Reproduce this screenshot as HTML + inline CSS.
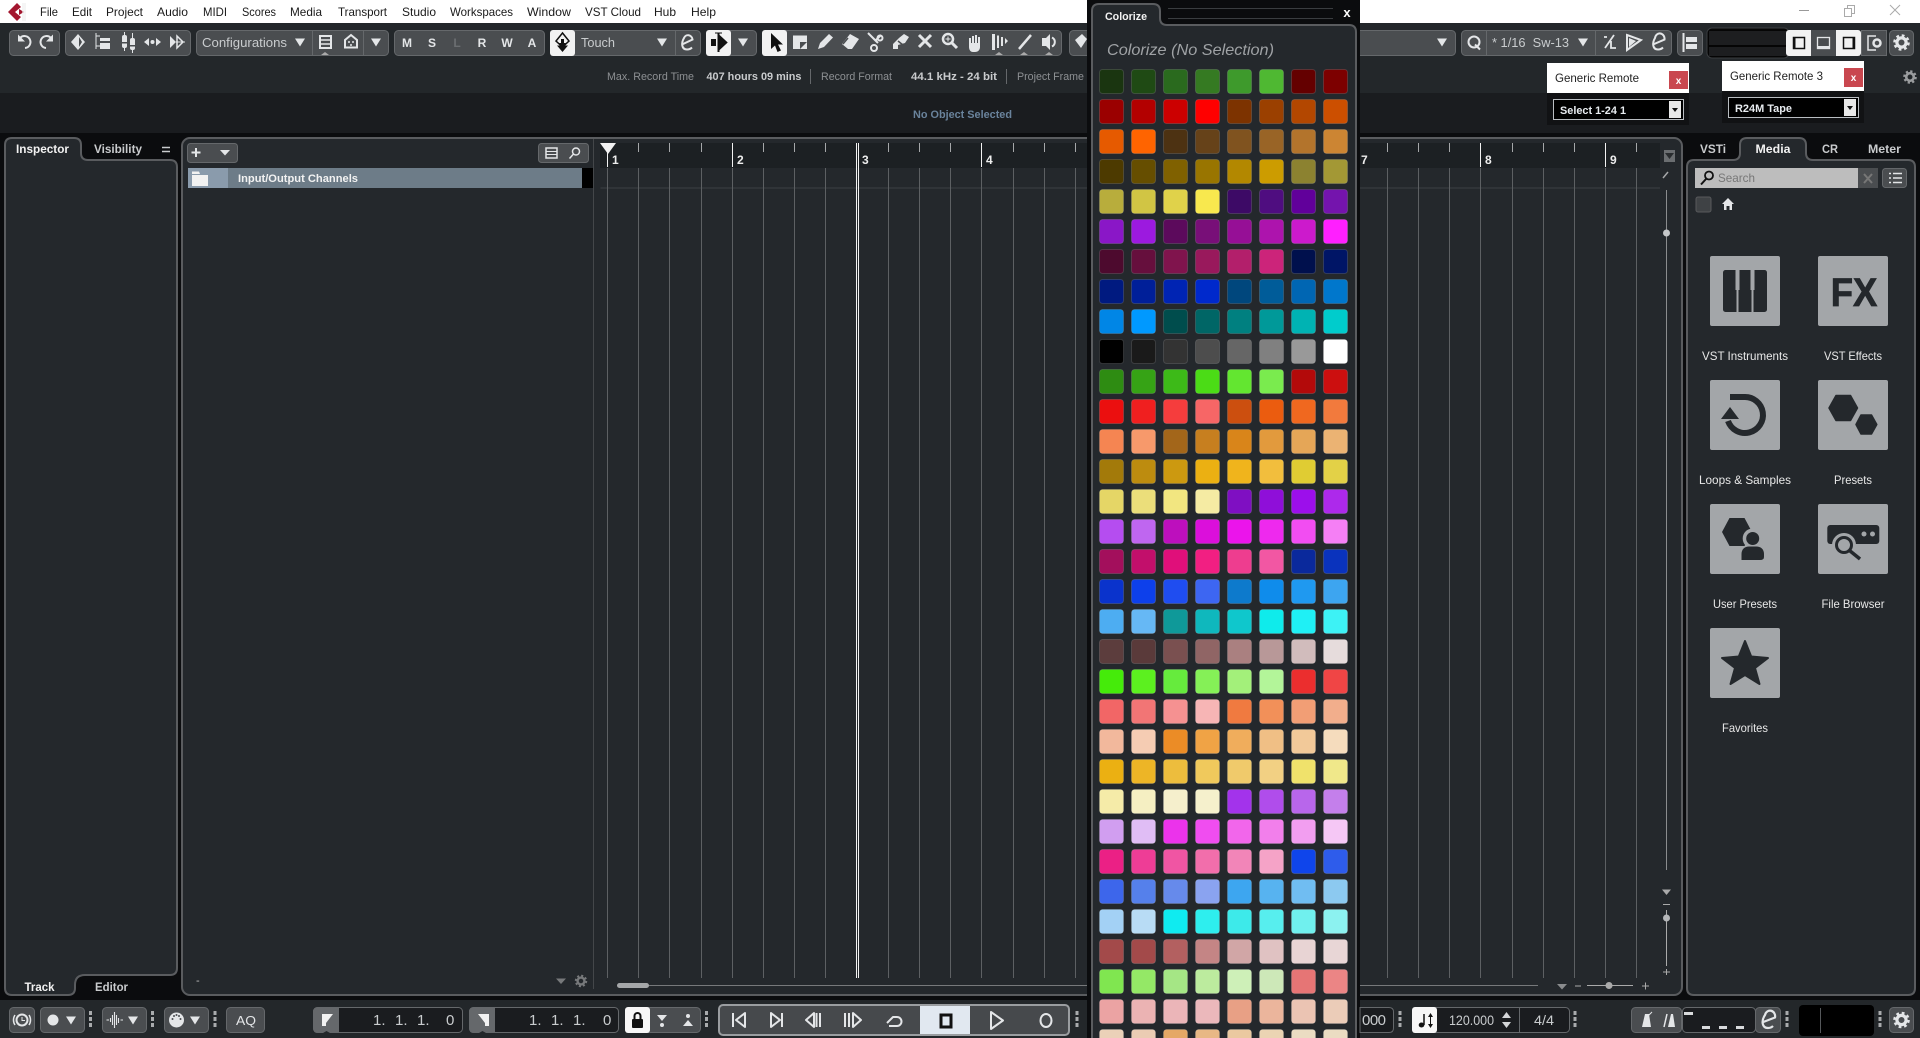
<!DOCTYPE html>
<html><head><meta charset="utf-8"><style>
html,body{margin:0;padding:0;background:#0b0c0e;width:1920px;height:1038px;overflow:hidden}
svg{display:block;font-family:"Liberation Sans",sans-serif}
.m{font-size:12px;fill:#1a1a1a}
.g{font-size:11px;fill:#8d9093}
.w{font-size:11px;fill:#c9cbcd;font-weight:bold}
.b{fill:#4a4d50;stroke:#65686b;stroke-width:1}
.d{fill:#1a1c1f;stroke:#65686b;stroke-width:1}
.t{fill:#c9ccce;font-size:13px}
.i{fill:#e4e6e8}
.k{fill:none;stroke:#e4e6e8;stroke-width:2}
.lb{font-size:12px;fill:#e8e8e8;text-anchor:middle}
.s rect{width:24px;height:24px;rx:3px;y:.5px;stroke:rgba(255,255,255,.13);stroke-width:1}
.n{font-size:15px;fill:#c9ccce}
.r{font-size:12px;font-weight:bold;fill:#eee}
</style></head><body>
<svg width="1920" height="1038" viewBox="0 0 1920 1038" xmlns="http://www.w3.org/2000/svg">
<defs>
<g id="gear"><circle r="4.6" fill="none" stroke="currentColor" stroke-width="3.2"/><circle r="7" fill="none" stroke="currentColor" stroke-width="2.6" stroke-dasharray="2.75 2.75"/></g>
<g id="dots" fill="#a9abad"><rect x="-1.5" y="1011" width="3" height="4"/><rect x="-1.5" y="1017" width="3" height="4"/><rect x="-1.5" y="1023" width="3" height="4"/></g>
<path id="arr" d="M-5 -3.5H5L0 4.5Z" fill="#e4e6e8"/>
</defs>

<rect width="1920" height="1038" fill="#0b0c0e"/>
<rect width="1920" height="23" fill="#fff"/>
<rect y="23" width="1920" height="70" fill="#23272a"/>
<rect y="93" width="1920" height="40" fill="#1a1c1f"/>
<rect y="1000" width="1920" height="38" fill="#23272a"/>

<!-- logo -->
<path d="M8 12 L17 3 L21 7 L15 12 L21 17 L17 21Z" fill="#a3172f"/><path d="M19 9 L24 12 L19 15Z" fill="#a3172f"/><rect x="22" y="3" width="4" height="18" fill="#eee" opacity=".6"/>
<!-- menu -->
<g class="m" style="font-size:12px" fill="#1a1a1a"><text x="40" y="16" textLength="18" lengthAdjust="spacingAndGlyphs">File</text><text x="72" y="16" textLength="20" lengthAdjust="spacingAndGlyphs">Edit</text><text x="106" y="16" textLength="37" lengthAdjust="spacingAndGlyphs">Project</text><text x="157" y="16" textLength="31" lengthAdjust="spacingAndGlyphs">Audio</text><text x="203" y="16" textLength="24" lengthAdjust="spacingAndGlyphs">MIDI</text><text x="242" y="16" textLength="34" lengthAdjust="spacingAndGlyphs">Scores</text><text x="290" y="16" textLength="32" lengthAdjust="spacingAndGlyphs">Media</text><text x="338" y="16" textLength="49" lengthAdjust="spacingAndGlyphs">Transport</text><text x="402" y="16" textLength="34" lengthAdjust="spacingAndGlyphs">Studio</text><text x="450" y="16" textLength="63" lengthAdjust="spacingAndGlyphs">Workspaces</text><text x="527" y="16" textLength="44" lengthAdjust="spacingAndGlyphs">Window</text><text x="585" y="16" textLength="56" lengthAdjust="spacingAndGlyphs">VST Cloud</text><text x="654" y="16" textLength="22" lengthAdjust="spacingAndGlyphs">Hub</text><text x="691" y="16" textLength="25" lengthAdjust="spacingAndGlyphs">Help</text></g>
<!-- window controls -->
<path d="M1799 10.500H1809" stroke="#999"/><path d="M1844.500 8.500h7v8h-7zM1847.500 8.500v-3h7v8h-3" fill="none" stroke="#aaa"/><path d="M1890 5L1900 15M1900 5L1890 15" stroke="#aaa"/>

<!-- toolbar groups -->
<rect class="b" x="9.500" y="30.500" width="50" height="25" rx="4"/>
<path class="k" d="M20.500 37.500 A6 6 0 1 1 25 48"/><path class="i" d="M18 34.500V41.500H25Z"/>
<path class="k" d="M50.500 37.500 A6 6 0 1 0 46 48"/><path class="i" d="M53 34.500V41.500H46Z"/>
<rect class="b" x="65.500" y="30.500" width="125" height="25" rx="4"/>
<path class="i" d="M78 34 L71 42 L78 50 L85 42Z"/><path d="M79 37 L82 42 L79 47Z" fill="#4a4d50"/>
<path d="M96 33V49M96 36H100M96 46H100" stroke="#e4e6e8" fill="none"/><rect class="i" x="100" y="38" width="10" height="3"/><rect class="i" x="100" y="43" width="10" height="6"/>
<rect class="i" x="122" y="35" width="5" height="13" rx="2"/><rect class="i" x="130" y="38" width="5" height="12" rx="2"/><path d="M124.500 32V51M132.500 33V53" stroke="#e4e6e8"/><rect x="122" y="42" width="5" height="1.500" fill="#4a4d50"/><rect x="130" y="45" width="5" height="1.500" fill="#4a4d50"/>
<path class="i" d="M144 42l5-4v8zM161 42l-5-4v8z"/><circle class="i" cx="152.500" cy="42" r="2"/>
<path class="i" d="M170 36l6 6-6 6z"/><path d="M177 36l6 6-6 6z" fill="none" stroke="#e4e6e8" stroke-width="1.500"/><path d="M176 42h9" stroke="#e4e6e8"/>

<rect class="b" x="196.500" y="30.500" width="192" height="25" rx="4"/>
<text class="t" x="202" y="47" textLength="85" lengthAdjust="spacingAndGlyphs">Configurations</text>
<use href="#arr" x="300" y="42"/><path d="M312.500 31V55M363.500 31V55" stroke="#65686b"/>
<rect x="320" y="36" width="11" height="12" fill="none" stroke="#e4e6e8" stroke-width="2"/><path d="M320 40h11M320 44h11" stroke="#e4e6e8" stroke-width="1.500"/>
<path d="M345 47.500V40L351 35L357 40V47.500Z" fill="none" stroke="#e4e6e8" stroke-width="2"/><circle class="i" cx="349" cy="42" r="1"/><circle class="i" cx="353" cy="42" r="1"/><circle class="i" cx="351" cy="45" r="1"/>
<use href="#arr" x="376" y="42"/><path d="M321 55l4-3 4 3z" fill="#aaa"/>

<rect class="b" x="394.500" y="30.500" width="150" height="25" rx="4"/>
<g font-size="12" font-weight="bold" fill="#e4e6e8" text-anchor="middle"><text x="407" y="47">M</text><text x="432" y="47">S</text><text x="457" y="47" fill="#6b6e71">L</text><text x="482" y="47">R</text><text x="507" y="47">W</text><text x="532" y="47">A</text></g>

<rect class="b" x="550.500" y="30.500" width="150" height="25" rx="4"/>
<rect x="550" y="30" width="25" height="26" rx="3" fill="#f2f2f2"/>
<path d="M562.500 33L556 41L562.500 47L569 41Z" fill="none" stroke="#111" stroke-width="1.500"/><path d="M559.500 43H561V39H564V43H565.500V45.500H568L562.500 52L557 45.500H559.500Z" fill="#111"/>
<text class="t" x="581" y="47" textLength="34" lengthAdjust="spacingAndGlyphs">Touch</text>
<use href="#arr" x="662" y="42"/><path d="M675.500 31V55" stroke="#65686b"/>
<path d="M682 44.500L692.500 39.500A4.500 5 0 0 0 684 38C681 43 681.500 49.500 687 49.500C689 49.500 691 48.500 692 47.500" fill="none" stroke="#e4e6e8" stroke-width="2"/>

<rect class="b" x="706.500" y="30.500" width="50" height="25" rx="4"/>
<rect x="706" y="30" width="25" height="26" rx="3" fill="#f2f2f2"/>
<rect x="711" y="39" width="5" height="7" fill="#111"/><path d="M718.500 33V52" stroke="#111" stroke-width="2"/><path d="M715 33h7M720 36l7 6.500-7 6.500z" fill="#111" stroke="#111" stroke-width="1"/>
<use href="#arr" x="743" y="42"/>

<rect class="b" x="762.500" y="30.500" width="299" height="25" rx="4"/>
<rect x="762" y="30" width="25" height="26" rx="3" fill="#f2f2f2"/>
<path d="M771 33V49L775 45.500L777.500 52L781 50.500L778 44.500H783Z" fill="#111"/>
<path class="i" d="M793 35.500H807V49H793Z"/><path d="M800 42H807L800 49Z" fill="#4a4d50"/>
<path class="i" d="M818 49L820 43L829 34L833 37.500L824 47Z"/>
<path class="i" d="M850 34L859 39L852 49H848L842 44Z"/><path d="M843 44L848 38" stroke="#4a4d50" stroke-width="1.500"/>
<path class="k" d="M868 33L878 43"/><path class="k" d="M881 35L875 41"/><circle cx="874" cy="48" r="3" class="k"/><circle cx="880" cy="38" r="2.500" class="k"/>
<path class="i" d="M893 49V44L899 38L904 34L909 37L905 43L898 45V49Z"/><path d="M898 41L903 45" stroke="#4a4d50" stroke-width="1.500"/>
<path d="M919 35L931 47M931 35L919 47" stroke="#e4e6e8" stroke-width="3"/>
<circle cx="948" cy="39" r="5" fill="none" stroke="#e4e6e8" stroke-width="2.500"/><path d="M952 43L957 48" stroke="#e4e6e8" stroke-width="3"/><path d="M945.500 39h5M948 36.500v5" stroke="#e4e6e8"/>
<path class="i" d="M969 38h2v5h1v-7h2v7h1v-8h2v8h1v-6h2v10c0 3-2 5-5 5h-2c-3 0-4-3-4-5z"/>
<path class="i" d="M992 34H995V50H992ZM997 35.500H999V48H997ZM1001 37H1003V46H1001ZM1005 38L1008 41L1005 44Z"/>
<path d="M1019 49L1031 35" stroke="#e4e6e8" stroke-width="2.500"/>
<path class="i" d="M1042 38H1046L1050 34V50L1046 46H1042Z"/><path d="M1052 37.500A5 5 0 0 1 1052 46.500" fill="none" stroke="#e4e6e8" stroke-width="2"/>
<path d="M995 55l4-3 4 3zM1020 55l4-3 4 3zM1045 55l4-3 4 3z" fill="#aaa"/>

<rect class="b" x="1069.500" y="30.500" width="386" height="25" rx="4"/>
<path class="i" d="M1075 40L1082 34L1087 39L1081 48Z"/>
<use href="#arr" x="1442" y="42"/>
<rect class="b" x="1461.500" y="30.500" width="210" height="25" rx="4"/>
<circle cx="1474" cy="42" r="5.500" fill="none" stroke="#e4e6e8" stroke-width="2"/><path d="M1475 44.500L1480 49.500" stroke="#e4e6e8" stroke-width="2"/>
<path d="M1486.500 31V55M1595.500 31V55" stroke="#65686b"/>
<text class="t" x="1492" y="47" textLength="77" lengthAdjust="spacingAndGlyphs">* 1/16&#160; Sw-13</text>
<use href="#arr" x="1583" y="42"/>
<path d="M1604 37H1607M1614 35L1605 48M1611 41V48L1616 48" fill="none" stroke="#e4e6e8" stroke-width="1.800"/>
<path d="M1627 35L1641 40L1627 50Z" fill="none" stroke="#e4e6e8" stroke-width="2"/><path class="i" d="M1629 38L1636 41L1629 47Z"/>
<path d="M1653 44.500L1664.500 39.500A4.500 5 0 0 0 1655 38C1652 43 1652.500 49.500 1658 49.500C1660 49.500 1662 48.500 1663 47.500" fill="none" stroke="#e4e6e8" stroke-width="2"/>
<rect class="b" x="1677.500" y="30.500" width="25" height="25" rx="4"/>
<path d="M1683.500 33V52" stroke="#e4e6e8" stroke-width="2"/><rect class="i" x="1686" y="37" width="11" height="5"/><rect class="i" x="1686" y="44" width="11" height="5"/>
<rect x="1707" y="28" width="82" height="30" rx="5" fill="#050505" stroke="#3a3d40"/><rect x="1709" y="31" width="78" height="14" fill="#1d1e20"/><rect x="1709" y="47" width="78" height="9" fill="#1d1e20"/>
<rect x="1786" y="30" width="75" height="26" rx="3" fill="#f2f2f2"/><rect x="1811" y="30" width="25" height="26" fill="#4a4d50"/><rect class="b" x="1861.500" y="30.500" width="25" height="25"/>
<rect x="1793.500" y="37.500" width="11" height="11" fill="none" stroke="#111" stroke-width="1.500"/><rect x="1793" y="37" width="2.500" height="12" fill="#111"/>
<rect x="1817.500" y="37.500" width="12" height="11" fill="none" stroke="#e4e6e8" stroke-width="1.300"/><rect class="i" x="1817" y="46" width="13" height="3"/>
<rect x="1843.500" y="37.500" width="11" height="11" fill="none" stroke="#111" stroke-width="1.500"/><rect x="1852.500" y="37" width="2.500" height="12" fill="#111"/>
<path d="M1876 36H1868V50H1876" fill="none" stroke="#e4e6e8" stroke-width="1.500"/><circle cx="1877" cy="43" r="3.500" fill="none" stroke="#e4e6e8" stroke-width="2.500"/>
<rect class="b" x="1889.500" y="30.500" width="24" height="25" rx="4"/><use href="#gear" x="1901.500" y="42.500" style="color:#e4e6e8"/>

<!-- status row -->
<text class="g" x="607" y="80" textLength="87" lengthAdjust="spacingAndGlyphs">Max. Record Time</text>
<text class="w" x="706.500" y="80" textLength="95" lengthAdjust="spacingAndGlyphs">407 hours 09 mins</text>
<path d="M810.500 69V84M1006.500 69V84" stroke="#65686b"/>
<text class="g" x="821" y="80" textLength="71" lengthAdjust="spacingAndGlyphs">Record Format</text>
<text class="w" x="911" y="80" textLength="86" lengthAdjust="spacingAndGlyphs">44.1 kHz - 24 bit</text>
<text class="g" x="1017" y="80" textLength="67" lengthAdjust="spacingAndGlyphs">Project Frame</text>
<text x="913" y="118" font-size="11" font-weight="bold" fill="#6a839c" textLength="99" lengthAdjust="spacingAndGlyphs">No Object Selected</text>
<g transform="translate(1910 77) scale(.82)"><use href="#gear" style="color:#9a9c9e"/></g>

<!-- inspector -->
<path d="M5 145Q5 138 12 138H74Q81 138 81 145V153Q81 160 88 160H170Q177 160 177 167V968Q177 975 170 975H85Q75 975 75 985V988Q75 995 68 995H12Q5 995 5 988Z" fill="#24282c" stroke="#5a5c5f" stroke-width="2"/>
<text x="16" y="153" font-size="12" font-weight="bold" fill="#f2f2f2" textLength="53" lengthAdjust="spacingAndGlyphs">Inspector</text>
<text x="94" y="153" font-size="12" font-weight="bold" fill="#c9cbcd" textLength="48" lengthAdjust="spacingAndGlyphs">Visibility</text>
<path d="M162 147.500H170M162 151.500H170" stroke="#c9cbcd" stroke-width="1.500"/>
<text x="24.500" y="991" font-size="12" font-weight="bold" fill="#f2f2f2" textLength="30" lengthAdjust="spacingAndGlyphs">Track</text>
<text x="95" y="991" font-size="12" font-weight="bold" fill="#c9cbcd" textLength="33" lengthAdjust="spacingAndGlyphs">Editor</text>

<!-- main panel -->
<rect x="182" y="138" width="1500" height="857" rx="8" fill="#24282c" stroke="#5a5c5f" stroke-width="2"/>
<rect class="b" x="187.500" y="143.500" width="50" height="19" rx="3"/>
<path d="M196 148V157M191.500 152.500H200.500" stroke="#e4e6e8" stroke-width="2"/><path d="M220 150H230L225 155.500Z" fill="#e4e6e8"/>
<rect class="b" x="538.500" y="143.500" width="50" height="19" rx="3"/>
<rect x="546" y="148" width="11" height="10" fill="none" stroke="#e4e6e8" stroke-width="1.500"/><path d="M546 151.500h11M546 154.500h11" stroke="#e4e6e8"/><circle cx="576" cy="151.500" r="3.500" fill="none" stroke="#e4e6e8" stroke-width="1.500"/><path d="M573.500 154L569.500 158.500" stroke="#e4e6e8" stroke-width="1.500"/>
<rect x="188" y="168" width="395" height="20" fill="#6d7c88"/><rect x="188" y="168" width="40" height="20" fill="#8a9bac"/><rect x="582" y="168" width="11" height="20" fill="#000"/>
<path d="M192 171.500H199L200 174H208V186H192Z" fill="#f2f2f2"/><path d="M192 174.500H208" stroke="#8a9bac"/>
<text x="238" y="182" font-size="11" font-weight="bold" fill="#f2f2f2" textLength="120" lengthAdjust="spacingAndGlyphs">Input/Output Channels</text>
<path d="M593.500 139V989" stroke="#44474a"/>
<text x="196" y="984" font-size="11" fill="#bbb">-</text>
<path d="M556 978.500H566L561 984Z" fill="#77797b"/><g transform="translate(581 981) scale(.75)"><use href="#gear" style="color:#77797b"/></g>

<!-- ruler -->
<rect x="600" y="143" width="1060" height="25" fill="#1c2023"/>
<path d="M600.500 188H1660" stroke="#3b3f43"/>
<path fill="none" stroke="#5d6063" d="M607.500 168V978M638.500 168V978M669.500 168V978M701.500 168V978M732.500 168V978M763.500 168V978M794.500 168V978M825.500 168V978M888.500 168V978M919.500 168V978M950.500 168V978M981.500 168V978M1013.500 168V978M1044.500 168V978M1075.500 168V978M1387.500 168V978M1418.500 168V978M1449.500 168V978M1480.500 168V978M1512.500 168V978M1543.500 168V978M1574.500 168V978M1605.500 168V978M1636.500 168V978"/>
<path fill="none" stroke="#a5a7a9" d="M638.500 143V152M669.500 143V152M701.500 143V152M763.500 143V152M794.500 143V152M825.500 143V152M888.500 143V152M919.500 143V152M950.500 143V152M1013.500 143V152M1044.500 143V152M1075.500 143V152M1387.500 143V152M1418.500 143V152M1449.500 143V152M1512.500 143V152M1543.500 143V152M1574.500 143V152M1636.500 143V152"/>
<path fill="none" stroke="#f2f2f2" d="M607.500 152V167M732.500 143V167M981.500 143V167M1480.500 143V167M1605.500 143V167"/>
<path d="M856.500 143V978M858.500 143V978" stroke="#f2f2f2"/>
<path d="M600 143H616L608 154Z" fill="#f2f2f2"/>
<g class="r"><text x="612" y="164">1</text><text x="737" y="164">2</text><text x="862" y="164">3</text><text x="986" y="164">4</text><text x="1361" y="164">7</text><text x="1485" y="164">8</text><text x="1610" y="164">9</text></g>
<rect x="1664" y="150" width="11" height="12" fill="#6b6e71"/><path d="M1665 153H1674L1669.500 159Z" fill="#2a2d30"/>
<path d="M1663 178L1668 172" stroke="#a5a7a9" stroke-width="1.500"/>
<path d="M1666.500 190V870" stroke="#8a8c8e"/><circle cx="1666.500" cy="233" r="3.500" fill="#c5c7c9"/>
<path d="M1662 889.500H1671L1666.500 895Z" fill="#aaa"/><path d="M1663 904.500H1670" stroke="#aaa"/><path d="M1666.500 910V966" stroke="#aaa"/><circle cx="1666.500" cy="918" r="3.500" fill="#b5b7b9"/><path d="M1663 972H1670M1666.500 969V975" stroke="#aaa"/>
<!-- h scroll -->
<path d="M617 985.500H1538" stroke="#77797b"/><rect x="617" y="983" width="32" height="5" rx="2.500" fill="#a5a7a9"/>
<path d="M1557 984H1567L1562 989.500Z" fill="#8a8c8e"/><path d="M1575 986H1581" stroke="#aaa"/><path d="M1587 985.500H1633" stroke="#aaa"/><circle cx="1609" cy="985.500" r="3.500" fill="#aaa"/><path d="M1642 986H1649M1645.500 982.500V989.500" stroke="#aaa"/>

<!-- right panel -->
<path d="M1687 167Q1687 160 1694 160H1733Q1740 160 1740 153V145Q1740 138 1747 138H1799Q1806 138 1806 145V153Q1806 160 1813 160H1908Q1915 160 1915 167V988Q1915 995 1908 995H1694Q1687 995 1687 988Z" fill="#24282c" stroke="#5a5c5f" stroke-width="2"/>
<g font-size="12" font-weight="bold"><text x="1700" y="153" fill="#c9cbcd" textLength="26" lengthAdjust="spacingAndGlyphs">VSTi</text><text x="1755.500" y="153" fill="#f2f2f2" textLength="35" lengthAdjust="spacingAndGlyphs">Media</text><text x="1822" y="153" fill="#c9cbcd" textLength="16" lengthAdjust="spacingAndGlyphs">CR</text><text x="1868" y="153" fill="#c9cbcd" textLength="33" lengthAdjust="spacingAndGlyphs">Meter</text></g>
<rect x="1695" y="168" width="163" height="20" fill="#bdbdbd"/><rect x="1858" y="168" width="20" height="20" fill="#4a4d50"/>
<circle cx="1709" cy="175.500" r="4" fill="none" stroke="#111" stroke-width="1.800"/><path d="M1706 179L1701 184.500" stroke="#111" stroke-width="2"/>
<text x="1718" y="182" font-size="12" fill="#777" textLength="37" lengthAdjust="spacingAndGlyphs">Search</text>
<path d="M1864 174L1872 183M1872 174L1864 183" stroke="#777" stroke-width="2"/>
<rect class="b" x="1882.500" y="168.500" width="24" height="19" rx="3"/><path d="M1889 173.500h2M1893 173.500h9M1889 178h2M1893 178h9M1889 182.500h2M1893 182.500h9" stroke="#e4e6e8" stroke-width="1.500"/>
<rect x="1696" y="197" width="15" height="15" rx="2" fill="#3f4245" stroke="#58595c"/>
<path class="i" d="M1722 204L1728 198L1734 204H1732V210H1729.500V206H1726.500V210H1724V204Z"/>

<!-- media tiles -->
<g fill="#a3a6a9">
<rect x="1710" y="256" width="70" height="70" rx="2"/><rect x="1818" y="256" width="70" height="70" rx="2"/>
<rect x="1710" y="380" width="70" height="70" rx="2"/><rect x="1818" y="380" width="70" height="70" rx="2"/>
<rect x="1710" y="504" width="70" height="70" rx="2"/><rect x="1818" y="504" width="70" height="70" rx="2"/>
<rect x="1710" y="628" width="70" height="70" rx="2"/>
</g>
<g transform="translate(1710 256)">
<rect x="13" y="14" width="44" height="42" rx="2.500" fill="#24282c"/>
<rect x="25.500" y="13" width="4" height="21" fill="#a3a6a9"/><rect x="40.500" y="13" width="4" height="21" fill="#a3a6a9"/>
<path d="M27.500 34V57M42.500 34V57" stroke="#a3a6a9" stroke-width="2" fill="none"/>
</g>
<text x="1830.700" y="306" font-size="40" font-weight="bold" fill="#24282c" stroke="#24282c" stroke-width=".8" textLength="46.600" lengthAdjust="spacingAndGlyphs">FX</text>
<g transform="translate(1710 380)" fill="#24282c">
<path d="M20 17H34A18 18 0 1 1 18 41" fill="none" stroke="#24282c" stroke-width="6"/><path d="M20 27L29 39H11Z"/>
</g>
<g transform="translate(1818 380)" fill="#24282c" stroke="#24282c" stroke-width="1.500" stroke-linejoin="round">
<path d="M11 28L18 15.500H32.500L39.500 28L32.500 40.500H18Z"/><path d="M38 44.500L43 35H53.500L58.800 44.500L53.500 54H43Z"/>
</g>
<g transform="translate(1710 504)" fill="#24282c">
<path d="M12 28L19.500 14H34.500L42 28L34.500 42H19.500Z"/><circle cx="42.700" cy="34.500" r="10" fill="#a3a6a9"/><circle cx="42.700" cy="34.500" r="6.500"/><path d="M31.500 56V50C31.500 45 35 42.500 39 42.500H46.500C50.500 42.500 54 45 54 50V53Q54 56 50 56Z"/>
</g>
<g transform="translate(1818 504)">
<rect x="9.300" y="21" width="52" height="19" rx="3" fill="#24282c"/><circle cx="46" cy="30" r="2.500" fill="#a3a6a9"/><circle cx="54.500" cy="30" r="2.500" fill="#a3a6a9"/>
<circle cx="26" cy="41" r="12" fill="#a3a6a9"/><circle cx="26" cy="41" r="7.500" fill="none" stroke="#24282c" stroke-width="3"/><path d="M31.500 46.500L42 55" stroke="#24282c" stroke-width="3.500"/>
</g>
<g transform="translate(1710 628)"><path d="M35 13L41.200 28.500L58 30L45 40L49.500 56L35 47L20.500 56L25 40L12 30L28.800 28.500Z" fill="#24282c" stroke="#24282c" stroke-width="2" stroke-linejoin="round"/></g>
<g textLength="0"><text class="lb" x="1745" y="360" textLength="86" lengthAdjust="spacingAndGlyphs">VST Instruments</text><text class="lb" x="1853" y="360" textLength="58" lengthAdjust="spacingAndGlyphs">VST Effects</text>
<text class="lb" x="1745" y="484" textLength="92" lengthAdjust="spacingAndGlyphs">Loops &amp; Samples</text><text class="lb" x="1853" y="484" textLength="38" lengthAdjust="spacingAndGlyphs">Presets</text>
<text class="lb" x="1745" y="608" textLength="64" lengthAdjust="spacingAndGlyphs">User Presets</text><text class="lb" x="1853" y="608" textLength="63" lengthAdjust="spacingAndGlyphs">File Browser</text>
<text class="lb" x="1745" y="732" textLength="46" lengthAdjust="spacingAndGlyphs">Favorites</text></g>

<!-- generic remotes -->
<rect x="1547" y="63" width="142" height="62" fill="#111214"/><rect x="1547" y="63" width="142" height="30" fill="#fff"/>
<text x="1555" y="82" font-size="12" fill="#222" textLength="84" lengthAdjust="spacingAndGlyphs">Generic Remote</text>
<rect x="1669" y="71" width="19" height="18" fill="#c9474f"/><text x="1678.500" y="84" font-size="10" font-weight="bold" fill="#fff" text-anchor="middle">x</text>
<rect x="1553.500" y="99.500" width="130" height="20" fill="#000" stroke="#b9bdc1"/><rect x="1669" y="101" width="12" height="17" fill="#e8e8e8"/><path d="M1672 108H1678L1675 112Z" fill="#111"/>
<text x="1560" y="114" font-size="11" font-weight="bold" fill="#e8ecf0" textLength="66" lengthAdjust="spacingAndGlyphs">Select 1-24 1</text>
<rect x="1722" y="61" width="142" height="62" fill="#111214"/><rect x="1722" y="61" width="142" height="30" fill="#fff"/>
<text x="1730" y="80" font-size="12" fill="#222" textLength="93" lengthAdjust="spacingAndGlyphs">Generic Remote 3</text>
<rect x="1844" y="68" width="19" height="19" fill="#c9474f"/><text x="1853.500" y="81" font-size="10" font-weight="bold" fill="#fff" text-anchor="middle">x</text>
<rect x="1728.500" y="97.500" width="130" height="20" fill="#000" stroke="#b9bdc1"/><rect x="1844" y="99" width="12" height="17" fill="#e8e8e8"/><path d="M1847 106H1853L1850 110Z" fill="#111"/>
<text x="1735" y="112" font-size="11" font-weight="bold" fill="#e8ecf0" textLength="57" lengthAdjust="spacingAndGlyphs">R24M Tape</text>

<!-- bottom bar -->
<rect class="b" x="9.500" y="1007.500" width="25" height="25" rx="4"/>
<circle cx="22" cy="1020" r="5.500" fill="none" stroke="#e4e6e8" stroke-width="2"/><path d="M22 1017V1020.500H25" fill="none" stroke="#e4e6e8"/><path d="M15 1015A9 9 0 0 0 15 1025M29 1015A9 9 0 0 1 29 1025" fill="none" stroke="#e4e6e8" stroke-width="1.500"/>
<rect class="b" x="40.500" y="1007.500" width="44" height="25" rx="4"/><circle class="i" cx="53" cy="1020" r="5.500"/><use href="#arr" x="71" y="1020"/>
<use href="#dots" x="90.500"/>
<rect class="b" x="102.500" y="1007.500" width="44" height="25" rx="4"/><path d="M106.500 1020H109M110.500 1018V1022M112.500 1015V1025M114.500 1012V1028M116.500 1015V1025M118.500 1018V1023M120.500 1020H123" stroke="#e4e6e8" stroke-width="1.100"/><use href="#arr" x="133" y="1020"/>
<use href="#dots" x="152.500"/>
<rect class="b" x="164.500" y="1007.500" width="44" height="25" rx="4"/><circle class="i" cx="176.500" cy="1020" r="7.500"/><g fill="#4a4d50"><circle cx="172.500" cy="1019" r="1"/><circle cx="180.500" cy="1019" r="1"/><circle cx="174" cy="1016" r="1"/><circle cx="179" cy="1016" r="1"/><circle cx="176.500" cy="1015" r="1"/></g><use href="#arr" x="195" y="1020"/>
<use href="#dots" x="215"/>
<rect class="b" x="226.500" y="1007.500" width="38" height="25" rx="4"/><text x="236" y="1025" font-size="13" fill="#e4e6e8" textLength="20" lengthAdjust="spacingAndGlyphs">AQ</text>

<rect class="d" x="313.500" y="1007.500" width="149" height="25" rx="4"/><path d="M313 1012Q313 1007 318 1007H339V1033H318Q313 1033 313 1028Z" fill="#65686b"/>
<path d="M322 1014H333L326 1023V1026H322Z" fill="#f2f2f2"/><path d="M323 1033l3.500-2 3.500 2z" fill="#23272a"/>
<g class="n"><text x="373" y="1025">1.</text><text x="395" y="1025">1.</text><text x="417" y="1025">1.</text><text x="446" y="1025">0</text></g>
<rect class="d" x="469.500" y="1007.500" width="149" height="25" rx="4"/><path d="M469 1012Q469 1007 474 1007H495V1033H474Q469 1033 469 1028Z" fill="#65686b"/>
<path d="M478 1014H489V1026H485V1023Z" fill="#f2f2f2"/><path d="M479 1033l3.500-2 3.500 2z" fill="#23272a"/>
<g class="n"><text x="529" y="1025">1.</text><text x="551" y="1025">1.</text><text x="573" y="1025">1.</text><text x="603" y="1025">0</text></g>

<rect class="b" x="625.500" y="1007.500" width="75" height="25" rx="4"/><rect x="625" y="1007" width="25" height="26" rx="3" fill="#f7f7f7"/>
<rect x="632" y="1019" width="11" height="9" rx="1" fill="#111"/><path d="M634.500 1019V1016A3 3 0 0 1 640.500 1016V1019" fill="none" stroke="#111" stroke-width="2"/>
<path class="i" d="M657 1015H667L662 1021Z"/><circle class="i" cx="662" cy="1025" r="2"/><path class="i" d="M683 1026H693L688 1020Z"/><circle class="i" cx="688" cy="1016" r="2"/>
<use href="#dots" x="706.500"/>

<rect x="719" y="1005" width="350" height="30" rx="4" fill="#46494c" stroke="#9a9da0" stroke-width="2"/>
<rect x="920" y="1006" width="50" height="28" fill="#e1e8f0"/>
<g fill="none" stroke="#e4e6e8" stroke-width="2" stroke-linejoin="round">
<path d="M733 1013V1027M745 1013V1027L736 1020Z"/>
<path d="M782 1013V1027M771 1013V1027L780 1020Z"/>
<path d="M814 1013V1027L806 1020ZM816.500 1013V1027M820 1013V1027"/>
<path d="M853 1013V1027L861 1020ZM845 1013V1027M849 1013V1027"/>
<path d="M889 1026H897A4.500 4.500 0 0 0 897 1017H893L887 1023"/>
<path d="M991 1012V1029L1003 1020.500Z"/>
<ellipse cx="1046" cy="1020.500" rx="5.500" ry="6.500"/>
</g>
<rect x="941" y="1015" width="10" height="12" fill="none" stroke="#111" stroke-width="3"/>
<use href="#dots" x="1077"/>

<!-- colorize window -->
<rect x="1087" y="0" width="273" height="1038" fill="#0b0c0e"/>
<path d="M1168 8.500H1333M1168 18.500H1333" stroke="#3a3d40"/>
<path d="M1092 1040V11Q1092 4 1099 4H1153Q1160 4 1160 11V18Q1160 25 1167 25H1349Q1356 25 1356 32V1040Z" fill="#24282c" stroke="#5a5c5f" stroke-width="2"/>
<text x="1105" y="20" font-size="11" font-weight="bold" fill="#f2f2f2" textLength="42" lengthAdjust="spacingAndGlyphs">Colorize</text>
<text x="1347" y="17" font-size="13" font-weight="bold" fill="#fff" text-anchor="middle">x</text>
<text x="1107" y="55" font-size="16" font-style="italic" fill="#9fa2a5" textLength="167" lengthAdjust="spacingAndGlyphs">Colorize (No Selection)</text>
<g class="s">
<g transform="translate(1099.500 69)"><rect x="0" fill="#1a3510"/><rect x="32" fill="#1f4a14"/><rect x="64" fill="#2a6a1e"/><rect x="96" fill="#357a22"/><rect x="128" fill="#3e9a2c"/><rect x="160" fill="#4fb832"/><rect x="192" fill="#640000"/><rect x="224" fill="#7d0000"/></g>
<g transform="translate(1099.500 99)"><rect x="0" fill="#9b0000"/><rect x="32" fill="#b30000"/><rect x="64" fill="#cc0000"/><rect x="96" fill="#ff0000"/><rect x="128" fill="#7d3300"/><rect x="160" fill="#9b4000"/><rect x="192" fill="#b34700"/><rect x="224" fill="#cc4f00"/></g>
<g transform="translate(1099.500 129)"><rect x="0" fill="#e65a00"/><rect x="32" fill="#ff6400"/><rect x="64" fill="#4d3212"/><rect x="96" fill="#664219"/><rect x="128" fill="#80531f"/><rect x="160" fill="#996426"/><rect x="192" fill="#b3742c"/><rect x="224" fill="#cc8533"/></g>
<g transform="translate(1099.500 159)"><rect x="0" fill="#4d3a00"/><rect x="32" fill="#664e00"/><rect x="64" fill="#806100"/><rect x="96" fill="#997500"/><rect x="128" fill="#b38800"/><rect x="160" fill="#cc9c00"/><rect x="192" fill="#8c8230"/><rect x="224" fill="#a39835"/></g>
<g transform="translate(1099.500 189)"><rect x="0" fill="#b8ad3c"/><rect x="32" fill="#d1c544"/><rect x="64" fill="#e0d24a"/><rect x="96" fill="#f8e84e"/><rect x="128" fill="#3d0a66"/><rect x="160" fill="#4f0d80"/><rect x="192" fill="#61009b"/><rect x="224" fill="#7414ad"/></g>
<g transform="translate(1099.500 219)"><rect x="0" fill="#8a17c7"/><rect x="32" fill="#9c1adf"/><rect x="64" fill="#5c0a5c"/><rect x="96" fill="#780f78"/><rect x="128" fill="#960f96"/><rect x="160" fill="#ad14ad"/><rect x="192" fill="#cc1acc"/><rect x="224" fill="#ff1fff"/></g>
<g transform="translate(1099.500 249)"><rect x="0" fill="#4d0a2e"/><rect x="32" fill="#660f3d"/><rect x="64" fill="#80144d"/><rect x="96" fill="#99195c"/><rect x="128" fill="#b31f6b"/><rect x="160" fill="#cc247a"/><rect x="192" fill="#00104d"/><rect x="224" fill="#001566"/></g>
<g transform="translate(1099.500 279)"><rect x="0" fill="#001a80"/><rect x="32" fill="#001f99"/><rect x="64" fill="#0024b3"/><rect x="96" fill="#0029cc"/><rect x="128" fill="#00477d"/><rect x="160" fill="#005c99"/><rect x="192" fill="#0066b3"/><rect x="224" fill="#0077cc"/></g>
<g transform="translate(1099.500 309)"><rect x="0" fill="#0086e6"/><rect x="32" fill="#0099ff"/><rect x="64" fill="#004d4d"/><rect x="96" fill="#006666"/><rect x="128" fill="#008080"/><rect x="160" fill="#009999"/><rect x="192" fill="#00b3b3"/><rect x="224" fill="#00cccc"/></g>
<g transform="translate(1099.500 339)"><rect x="0" fill="#000000"/><rect x="32" fill="#1a1a1a"/><rect x="64" fill="#333333"/><rect x="96" fill="#4d4d4d"/><rect x="128" fill="#666666"/><rect x="160" fill="#808080"/><rect x="192" fill="#999999"/><rect x="224" fill="#ffffff"/></g>
<g transform="translate(1099.500 369)"><rect x="0" fill="#2e8c12"/><rect x="32" fill="#36a315"/><rect x="64" fill="#3dba18"/><rect x="96" fill="#4bdc16"/><rect x="128" fill="#63e630"/><rect x="160" fill="#7aeb4e"/><rect x="192" fill="#b30a0a"/><rect x="224" fill="#cc0f0f"/></g>
<g transform="translate(1099.500 399)"><rect x="0" fill="#eb0f0f"/><rect x="32" fill="#f01f1f"/><rect x="64" fill="#f53d3d"/><rect x="96" fill="#f76666"/><rect x="128" fill="#cc4f0f"/><rect x="160" fill="#eb5c0f"/><rect x="192" fill="#f0681f"/><rect x="224" fill="#f27a3d"/></g>
<g transform="translate(1099.500 429)"><rect x="0" fill="#f58552"/><rect x="32" fill="#f7996b"/><rect x="64" fill="#a3661a"/><rect x="96" fill="#c77f1f"/><rect x="128" fill="#d9851a"/><rect x="160" fill="#e29a3d"/><rect x="192" fill="#e5a657"/><rect x="224" fill="#ebb373"/></g>
<g transform="translate(1099.500 459)"><rect x="0" fill="#a37a0a"/><rect x="32" fill="#bd8c0f"/><rect x="64" fill="#cc9910"/><rect x="96" fill="#ebb012"/><rect x="128" fill="#f0b41c"/><rect x="160" fill="#f2be3d"/><rect x="192" fill="#e0cc33"/><rect x="224" fill="#e3d147"/></g>
<g transform="translate(1099.500 489)"><rect x="0" fill="#e5d666"/><rect x="32" fill="#ebde7a"/><rect x="64" fill="#f2e680"/><rect x="96" fill="#f5eba3"/><rect x="128" fill="#7f0fc2"/><rect x="160" fill="#8f0fd9"/><rect x="192" fill="#9c0feb"/><rect x="224" fill="#ad29eb"/></g>
<g transform="translate(1099.500 519)"><rect x="0" fill="#b54df0"/><rect x="32" fill="#bf66f0"/><rect x="64" fill="#bd0fbd"/><rect x="96" fill="#db0fdb"/><rect x="128" fill="#eb14eb"/><rect x="160" fill="#ee29ee"/><rect x="192" fill="#f24df2"/><rect x="224" fill="#f57ff5"/></g>
<g transform="translate(1099.500 549)"><rect x="0" fill="#a30f5c"/><rect x="32" fill="#c20f6b"/><rect x="64" fill="#e00f7a"/><rect x="96" fill="#f21f82"/><rect x="128" fill="#ee3d8f"/><rect x="160" fill="#f257a3"/><rect x="192" fill="#0a299c"/><rect x="224" fill="#0a33bd"/></g>
<g transform="translate(1099.500 579)"><rect x="0" fill="#0a33cc"/><rect x="32" fill="#0d40eb"/><rect x="64" fill="#1f4df0"/><rect x="96" fill="#3d66f2"/><rect x="128" fill="#0d7acc"/><rect x="160" fill="#0f8ceb"/><rect x="192" fill="#1f99f0"/><rect x="224" fill="#3da5f0"/></g>
<g transform="translate(1099.500 609)"><rect x="0" fill="#4dadf2"/><rect x="32" fill="#66b8f5"/><rect x="64" fill="#0f9999"/><rect x="96" fill="#0fb8bd"/><rect x="128" fill="#0fc7cc"/><rect x="160" fill="#0febeb"/><rect x="192" fill="#1ff0f5"/><rect x="224" fill="#3df2f5"/></g>
<g transform="translate(1099.500 639)"><rect x="0" fill="#5c3d3d"/><rect x="32" fill="#5a3a3a"/><rect x="64" fill="#7a5050"/><rect x="96" fill="#906565"/><rect x="128" fill="#aa8080"/><rect x="160" fill="#b89898"/><rect x="192" fill="#d1bcbc"/><rect x="224" fill="#e6dcdc"/></g>
<g transform="translate(1099.500 669)"><rect x="0" fill="#45eb0a"/><rect x="32" fill="#5cf01f"/><rect x="64" fill="#66eb3d"/><rect x="96" fill="#85f057"/><rect x="128" fill="#a3f07a"/><rect x="160" fill="#b3f599"/><rect x="192" fill="#eb2e2e"/><rect x="224" fill="#f04545"/></g>
<g transform="translate(1099.500 699)"><rect x="0" fill="#f26666"/><rect x="32" fill="#f27575"/><rect x="64" fill="#f59191"/><rect x="96" fill="#f7b5b5"/><rect x="128" fill="#f07a40"/><rect x="160" fill="#f29059"/><rect x="192" fill="#f29e75"/><rect x="224" fill="#f2ae8c"/></g>
<g transform="translate(1099.500 729)"><rect x="0" fill="#f2b89c"/><rect x="32" fill="#f5ccb3"/><rect x="64" fill="#eb8c26"/><rect x="96" fill="#f0a345"/><rect x="128" fill="#f0ad5c"/><rect x="160" fill="#f0bf85"/><rect x="192" fill="#f2c999"/><rect x="224" fill="#f5dcbd"/></g>
<g transform="translate(1099.500 759)"><rect x="0" fill="#ebb012"/><rect x="32" fill="#edb526"/><rect x="64" fill="#edbd3d"/><rect x="96" fill="#f0c95c"/><rect x="128" fill="#f0ca6b"/><rect x="160" fill="#f2d083"/><rect x="192" fill="#f0e26b"/><rect x="224" fill="#f0e88a"/></g>
<g transform="translate(1099.500 789)"><rect x="0" fill="#f5eba8"/><rect x="32" fill="#f5efc2"/><rect x="64" fill="#f5efcc"/><rect x="96" fill="#f5f0cc"/><rect x="128" fill="#a333eb"/><rect x="160" fill="#b04deb"/><rect x="192" fill="#b866eb"/><rect x="224" fill="#c47feb"/></g>
<g transform="translate(1099.500 819)"><rect x="0" fill="#d19ef0"/><rect x="32" fill="#e0bdf5"/><rect x="64" fill="#eb33eb"/><rect x="96" fill="#f04df0"/><rect x="128" fill="#f266eb"/><rect x="160" fill="#f27feb"/><rect x="192" fill="#f29ef0"/><rect x="224" fill="#f5c7f5"/></g>
<g transform="translate(1099.500 849)"><rect x="0" fill="#eb2085"/><rect x="32" fill="#ee3d96"/><rect x="64" fill="#f055a3"/><rect x="96" fill="#f26eab"/><rect x="128" fill="#f285b8"/><rect x="160" fill="#f5a3c7"/><rect x="192" fill="#0f45eb"/><rect x="224" fill="#2e5ceb"/></g>
<g transform="translate(1099.500 879)"><rect x="0" fill="#3d66eb"/><rect x="32" fill="#5580eb"/><rect x="64" fill="#668aeb"/><rect x="96" fill="#8aa3f0"/><rect x="128" fill="#3da6f0"/><rect x="160" fill="#57b3f0"/><rect x="192" fill="#70bdf2"/><rect x="224" fill="#8cc9f0"/></g>
<g transform="translate(1099.500 909)"><rect x="0" fill="#a3d1f5"/><rect x="32" fill="#b8dcf5"/><rect x="64" fill="#0febf0"/><rect x="96" fill="#2eeeee"/><rect x="128" fill="#3deaea"/><rect x="160" fill="#57eeee"/><rect x="192" fill="#70f0ee"/><rect x="224" fill="#8cf2f0"/></g>
<g transform="translate(1099.500 939)"><rect x="0" fill="#a34a4a"/><rect x="32" fill="#a34a4a"/><rect x="64" fill="#b36060"/><rect x="96" fill="#c48585"/><rect x="128" fill="#d1a6a6"/><rect x="160" fill="#e0c2c2"/><rect x="192" fill="#e8d4d4"/><rect x="224" fill="#e8d6d6"/></g>
<g transform="translate(1099.500 969)"><rect x="0" fill="#80e650"/><rect x="32" fill="#94e866"/><rect x="64" fill="#a5e685"/><rect x="96" fill="#bceb9e"/><rect x="128" fill="#cef0b8"/><rect x="160" fill="#cde8b8"/><rect x="192" fill="#e67575"/><rect x="224" fill="#eb8585"/></g>
<g transform="translate(1099.500 999)"><rect x="0" fill="#eba3a3"/><rect x="32" fill="#ebb3b3"/><rect x="64" fill="#ebb5b8"/><rect x="96" fill="#ebb8bb"/><rect x="128" fill="#e8a085"/><rect x="160" fill="#ebb59c"/><rect x="192" fill="#ebc4b3"/><rect x="224" fill="#ebccb8"/></g>
<g transform="translate(1099.500 1029)"><rect x="0" fill="#ebd1b8"/><rect x="32" fill="#ebccb3"/><rect x="64" fill="#e5a866"/><rect x="96" fill="#e8b885"/><rect x="128" fill="#ebc9a0"/><rect x="160" fill="#ebd4b3"/><rect x="192" fill="#ebdcc2"/><rect x="224" fill="#ebdcc2"/></g>
</g>

<!-- bottom right -->
<path d="M1360 1007.500H1389Q1393.500 1007.500 1393.500 1012V1028Q1393.500 1032.500 1389 1032.500H1360Z" fill="#1a1c1f" stroke="#65686b"/>
<text class="n" x="1362" y="1025" textLength="24" lengthAdjust="spacing">000</text>
<use href="#dots" x="1400"/>
<rect class="d" x="1412.500" y="1007.500" width="157" height="25" rx="4"/><rect x="1412" y="1007" width="25" height="26" rx="3" fill="#f7f7f7"/>
<ellipse cx="1421.500" cy="1025" rx="2.800" ry="2.500" fill="#111"/><path d="M1424 1025V1014" stroke="#111" stroke-width="1.500"/><path d="M1428 1017L1430.500 1013L1433 1017ZM1428 1024L1430.500 1028L1433 1024Z" fill="#111"/><path d="M1430.500 1016V1025" stroke="#111"/>
<text class="n" x="1449" y="1025" style="font-size:14px" textLength="45" lengthAdjust="spacingAndGlyphs">120.000</text>
<path d="M1502 1018L1506.500 1012L1511 1018ZM1502 1022L1506.500 1028L1511 1022Z" fill="#d4d6d8"/><path d="M1519.500 1008V1032" stroke="#65686b"/>
<text class="n" x="1534" y="1025" style="font-size:14px" textLength="20" lengthAdjust="spacingAndGlyphs">4/4</text>
<use href="#dots" x="1575"/>
<rect class="b" x="1631.500" y="1007.500" width="50" height="25" rx="4"/>
<path class="i" d="M1642 1027L1645 1014H1649L1651 1027Z"/><path d="M1648 1016L1652 1012" stroke="#e4e6e8"/>
<path d="M1664 1027L1667 1014" stroke="#e4e6e8" stroke-width="1.500"/><path class="i" d="M1668 1027L1671 1014H1673L1675 1027Z"/>
<rect class="d" x="1682.500" y="1007.500" width="73" height="25" rx="4"/>
<rect x="1684" y="1012" width="9" height="3" fill="#d8dadc"/><rect x="1702" y="1026" width="8" height="3" fill="#d8dadc"/><rect x="1719" y="1026" width="8" height="3" fill="#d8dadc"/><rect x="1736" y="1026" width="8" height="3" fill="#d8dadc"/>
<rect class="b" x="1755.500" y="1007.500" width="25" height="25" rx="4"/><path d="M1762 1022.500L1775 1017.500A5 5.500 0 0 0 1765 1015C1761 1021 1762 1028 1768 1028C1770 1028 1772 1027 1773 1026" fill="none" stroke="#e4e6e8" stroke-width="2.200"/>
<use href="#dots" x="1787"/>
<rect x="1799" y="1005" width="75" height="31" rx="4" fill="#000"/><path d="M1820.500 1008V1033" stroke="#55585b"/>
<use href="#dots" x="1880"/>
<rect class="b" x="1889.500" y="1007.500" width="24" height="25" rx="4"/><use href="#gear" x="1901.500" y="1020" style="color:#e4e6e8"/>
</svg>
</body></html>
